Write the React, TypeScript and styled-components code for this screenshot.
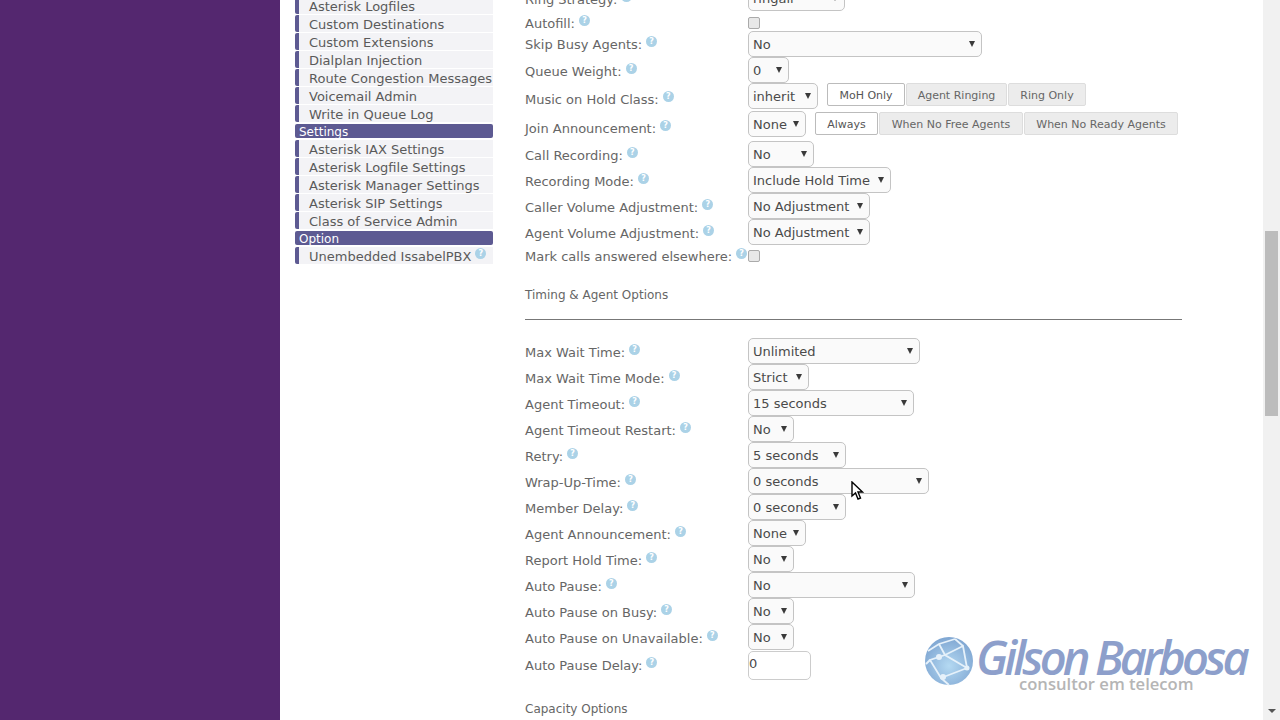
import React from 'react';
import styled, { createGlobalStyle } from 'styled-components';

const GlobalStyle = createGlobalStyle`
    html, body {
        margin: 0;
        height: 100%;
        overflow: hidden;
    }
    body {
        font-family: 'DejaVu Sans', Verdana, sans-serif;
    }
`;

const Page = styled.div`
    position: relative;
    display: flex;
    width: 1280px;
    height: 720px;
    overflow: hidden;
    background: #fff;
`;

const Side = styled.div`
    width: 280px;
    flex: none;
    background: #54276f;
`;

const Main = styled.div`
    flex: 1;
    display: flex;
    align-items: flex-start;
    min-width: 0;
    height: 720px;
    overflow: hidden;
`;

const Scrollbar = styled.div`
    width: 17px;
    flex: none;
    padding-top: 231px;
    box-sizing: border-box;
    background: #f1f1f1;
    display: flex;
    flex-direction: column;
    align-items: center;
`;

const Thumb = styled.div`
    width: 13px;
    height: 185px;
    background: #bcbcbc;
`;

const ScrollArrow = styled.div`
    margin-top: auto;
    margin-bottom: 7px;
    border-left: 4px solid transparent;
    border-right: 4px solid transparent;
    border-top: 4px solid #555;
`;

const Nav = styled.div`
    width: 198px;
    flex: none;
    margin: -3px 0 0 15px;
    display: flex;
    flex-direction: column;
`;

const NavItem = styled.div`
    height: 17px;
    margin-bottom: 1px;
    border-left: 4px solid #5d5a92;
    border-radius: 2px 0 0 2px;
    background: #f3f3f6;
    color: #5a5a5a;
    font-size: 13px;
    line-height: 20px;
    padding-left: 10px;
    white-space: nowrap;
`;

const NavHeader = styled.div`
    height: 14px;
    margin: 1px 0 2px;
    background: #5d5a92;
    border-radius: 2px;
    color: #fff;
    font-size: 12px;
    line-height: 16px;
    padding-left: 4px;
`;

const Form = styled.div`
    width: 657px;
    flex: none;
    margin: -15px 0 0 32px;
    display: flex;
    flex-direction: column;
`;

const Row = styled.div<{ $h?: number; $top?: number }>`
    display: flex;
    align-items: center;
    height: ${p => p.$h ?? 26}px;
    margin-top: ${p => p.$top ?? 0}px;
`;

const Label = styled.div<{ $dy: number }>`
    width: 223px;
    flex: none;
    color: #666;
    font-size: 13px;
    padding-top: ${p => 2 + p.$dy * 2}px;
    white-space: nowrap;
`;

const Help = styled.span`
    display: inline-block;
    width: 11px;
    height: 11px;
    margin-left: 4px;
    border-radius: 50%;
    background: #abd2e7;
    color: #fff;
    font-size: 8px;
    font-weight: 700;
    line-height: 11px;
    text-align: center;
    vertical-align: 5px;
`;

const SelectWrap = styled.div<{ $w: number }>`
    position: relative;
    width: ${p => p.$w}px;
    height: 26px;
    flex: none;

    &::after {
        content: '';
        position: absolute;
        right: 7px;
        top: 10px;
        border-left: 3.5px solid transparent;
        border-right: 3.5px solid transparent;
        border-top: 6px solid #3a3a3a;
        pointer-events: none;
    }
`;

const NativeSelect = styled.select`
    appearance: none;
    width: 100%;
    height: 100%;
    box-sizing: border-box;
    margin: 0;
    padding: 0 0 0 4px;
    border: 1px solid #c4c4c4;
    border-radius: 5px;
    background: #fafafa;
    color: #4a4a4a;
    font-family: inherit;
    font-size: 13px;
`;

const Check = styled.span<{ $drop?: number }>`
    width: 12px;
    height: 12px;
    margin-top: ${p => p.$drop ?? 0}px;
    box-sizing: border-box;
    border: 1px solid #aaa;
    border-radius: 2px;
    background: #e8e8e8;
`;

const ButtonGroup = styled.div<{ $gap: number; $lift?: number }>`
    display: flex;
    gap: 1px;
    margin-left: ${p => p.$gap}px;
    margin-bottom: ${p => p.$lift ?? 0}px;
`;

const Toggle = styled.div<{ $w: number; $active?: boolean }>`
    width: ${p => p.$w}px;
    height: 23px;
    box-sizing: border-box;
    border: 1px solid ${p => (p.$active ? '#bbb' : '#ddd')};
    border-radius: 2px;
    background: ${p => (p.$active ? '#fff' : '#ececec')};
    color: ${p => (p.$active ? '#555' : '#666')};
    font-size: 11px;
    line-height: 23px;
    text-align: center;
    white-space: nowrap;
`;

const SectionTitle = styled.div<{ $h: number; $drop?: number }>`
    height: ${p => p.$h}px;
    box-sizing: border-box;
    padding-top: ${p => p.$drop ?? 0}px;
    color: #666;
    font-size: 12px;
    display: flex;
    align-items: center;
`;

const Rule = styled.div`
    height: 1px;
    background: #777;
    margin-bottom: 18px;
`;

const NumberInput = styled.input`
    width: 63px;
    height: 29px;
    box-sizing: border-box;
    padding: 0 0 3px 0;
    border: 1px solid #ccc;
    border-radius: 5px;
    color: #4a4a4a;
    font-family: inherit;
    font-size: 13px;
`;

const Logo = styled.div`
    position: absolute;
    left: 925px;
    top: 636px;
    width: 330px;
    display: flex;
    gap: 3px;
`;

const LogoText = styled.div`
    display: flex;
    flex-direction: column;
    align-items: flex-start;
    padding-top: 2px;
`;

const LogoName = styled.div`
    height: 38px;
    font-family: 'Open Sans', sans-serif;
    font-style: italic;
    font-weight: 600;
    font-size: 47px;
    line-height: 38px;
    letter-spacing: -3.9px;
    color: #8d9fcb;
    white-space: nowrap;
`;

const LogoTag = styled.div`
    font-family: 'Open Sans', sans-serif;
    font-weight: 600;
    font-size: 16.6px;
    line-height: 16px;
    margin-left: 43px;
    color: #b5b5b5;
    white-space: nowrap;
`;

const Cursor = styled.svg`
    position: absolute;
    left: 851px;
    top: 481px;
`;

const Globe = () => (
    <svg width="48" height="50" viewBox="0 0 48 50">
        <defs>
            <radialGradient id="globeFill" cx="0.5" cy="0.6" r="0.6">
                <stop offset="0" stopColor="#b4d9f2" />
                <stop offset="1" stopColor="#7fa6d2" />
            </radialGradient>
        </defs>
        <circle cx="24" cy="25" r="24" fill="url(#globeFill)" />
        <path d="M3 15 L14 8 L30 3 M14 8 L20 19 L42 32 M20 19 L5 24 L16 42 L42 32 L38 10 L20 19 M16 42 L24 49 M30 3 L38 10 M5 24 L1 28" fill="none" stroke="#e6f1fa" strokeWidth="1.8" />
        <circle cx="14" cy="21" r="3" fill="#e6f1fa" />
        <circle cx="42" cy="32" r="2.5" fill="#e6f1fa" />
        <circle cx="18" cy="41" r="3" fill="#e6f1fa" />
    </svg>
);

const menuTop = ['Asterisk Logfiles', 'Custom Destinations', 'Custom Extensions', 'Dialplan Injection', 'Route Congestion Messages', 'Voicemail Admin', 'Write in Queue Log'];
const menuSettings = ['Asterisk IAX Settings', 'Asterisk Logfile Settings', 'Asterisk Manager Settings', 'Asterisk SIP Settings', 'Class of Service Admin'];

const timingRows: [string, string, number][] = [
    ['Max Wait Time:', 'Unlimited', 172],
    ['Max Wait Time Mode:', 'Strict', 61],
    ['Agent Timeout:', '15 seconds', 166],
    ['Agent Timeout Restart:', 'No', 46],
    ['Retry:', '5 seconds', 98],
    ['Wrap-Up-Time:', '0 seconds', 181],
    ['Member Delay:', '0 seconds', 98],
    ['Agent Announcement:', 'None', 58],
    ['Report Hold Time:', 'No', 46],
    ['Auto Pause:', 'No', 167],
    ['Auto Pause on Busy:', 'No', 46],
    ['Auto Pause on Unavailable:', 'No', 46],
];

const Select = ({ value, w }: { value: string; w: number }) => (
    <SelectWrap $w={w}>
        <NativeSelect defaultValue={value}>
            <option>{value}</option>
        </NativeSelect>
    </SelectWrap>
);

const FieldLabel = ({ text, dy = 0 }: { text: string; dy?: number }) => (
    <Label $dy={dy}>
        {text}
        <Help>?</Help>
    </Label>
);

const App: React.FC = () => (
    <Page>
        <GlobalStyle />
        <Side />
        <Main>
            <Nav>
                {menuTop.map(item => (
                    <NavItem key={item}>{item}</NavItem>
                ))}
                <NavHeader>Settings</NavHeader>
                {menuSettings.map(item => (
                    <NavItem key={item}>{item}</NavItem>
                ))}
                <NavHeader>Option</NavHeader>
                <NavItem>
                    Unembedded IssabelPBX
                    <Help>?</Help>
                </NavItem>
            </Nav>
            <Form>
                <Row>
                    <FieldLabel text="Ring Strategy:" />
                    <Select value="ringall" w={97} />
                </Row>
                <Row $h={20}>
                    <FieldLabel text="Autofill:" dy={1} />
                    <Check $drop={4} />
                </Row>
                <Row>
                    <FieldLabel text="Skip Busy Agents:" dy={-1} />
                    <Select value="No" w={234} />
                </Row>
                <Row>
                    <FieldLabel text="Queue Weight:" />
                    <Select value="0" w={41} />
                </Row>
                <Row>
                    <FieldLabel text="Music on Hold Class:" dy={2} />
                    <Select value="inherit" w={70} />
                    <ButtonGroup $gap={9} $lift={3}>
                        <Toggle $w={78} $active>MoH Only</Toggle>
                        <Toggle $w={101}>Agent Ringing</Toggle>
                        <Toggle $w={78}>Ring Only</Toggle>
                    </ButtonGroup>
                </Row>
                <Row $h={30}>
                    <FieldLabel text="Join Announcement:" dy={3} />
                    <Select value="None" w={58} />
                    <ButtonGroup $gap={9} $lift={1}>
                        <Toggle $w={63} $active>Always</Toggle>
                        <Toggle $w={144}>When No Free Agents</Toggle>
                        <Toggle $w={154}>When No Ready Agents</Toggle>
                    </ButtonGroup>
                </Row>
                <Row $top={2}>
                    <FieldLabel text="Call Recording:" />
                    <Select value="No" w={66} />
                </Row>
                <Row>
                    <FieldLabel text="Recording Mode:" />
                    <Select value="Include Hold Time" w={143} />
                </Row>
                <Row>
                    <FieldLabel text="Caller Volume Adjustment:" />
                    <Select value="No Adjustment" w={122} />
                </Row>
                <Row>
                    <FieldLabel text="Agent Volume Adjustment:" />
                    <Select value="No Adjustment" w={122} />
                </Row>
                <Row $h={22}>
                    <FieldLabel text="Mark calls answered elsewhere:" dy={-1} />
                    <Check />
                </Row>
                <SectionTitle $h={52} $drop={4}>Timing &amp; Agent Options</SectionTitle>
                <Rule />
                {timingRows.map(([label, value, w]) => (
                    <Row key={label}>
                        <FieldLabel text={label} />
                        <Select value={value} w={w} />
                    </Row>
                ))}
                <Row $h={30}>
                    <FieldLabel text="Auto Pause Delay:" dy={-1} />
                    <NumberInput defaultValue="0" />
                </Row>
                <SectionTitle $h={58}>Capacity Options</SectionTitle>
            </Form>
        </Main>
        <Scrollbar>
            <Thumb />
            <ScrollArrow />
        </Scrollbar>
        <Logo>
            <Globe />
            <LogoText>
                <LogoName>Gilson Barbosa</LogoName>
                <LogoTag>consultor em telecom</LogoTag>
            </LogoText>
        </Logo>
        <Cursor width="14" height="20" viewBox="0 0 14 20">
            <path d="M1 1 L1 15 L4.5 12 L7 18 L9.5 17 L7 11 L11.5 11 Z" fill="#fff" stroke="#000" strokeWidth="1.4" />
        </Cursor>
    </Page>
);

export default App;
